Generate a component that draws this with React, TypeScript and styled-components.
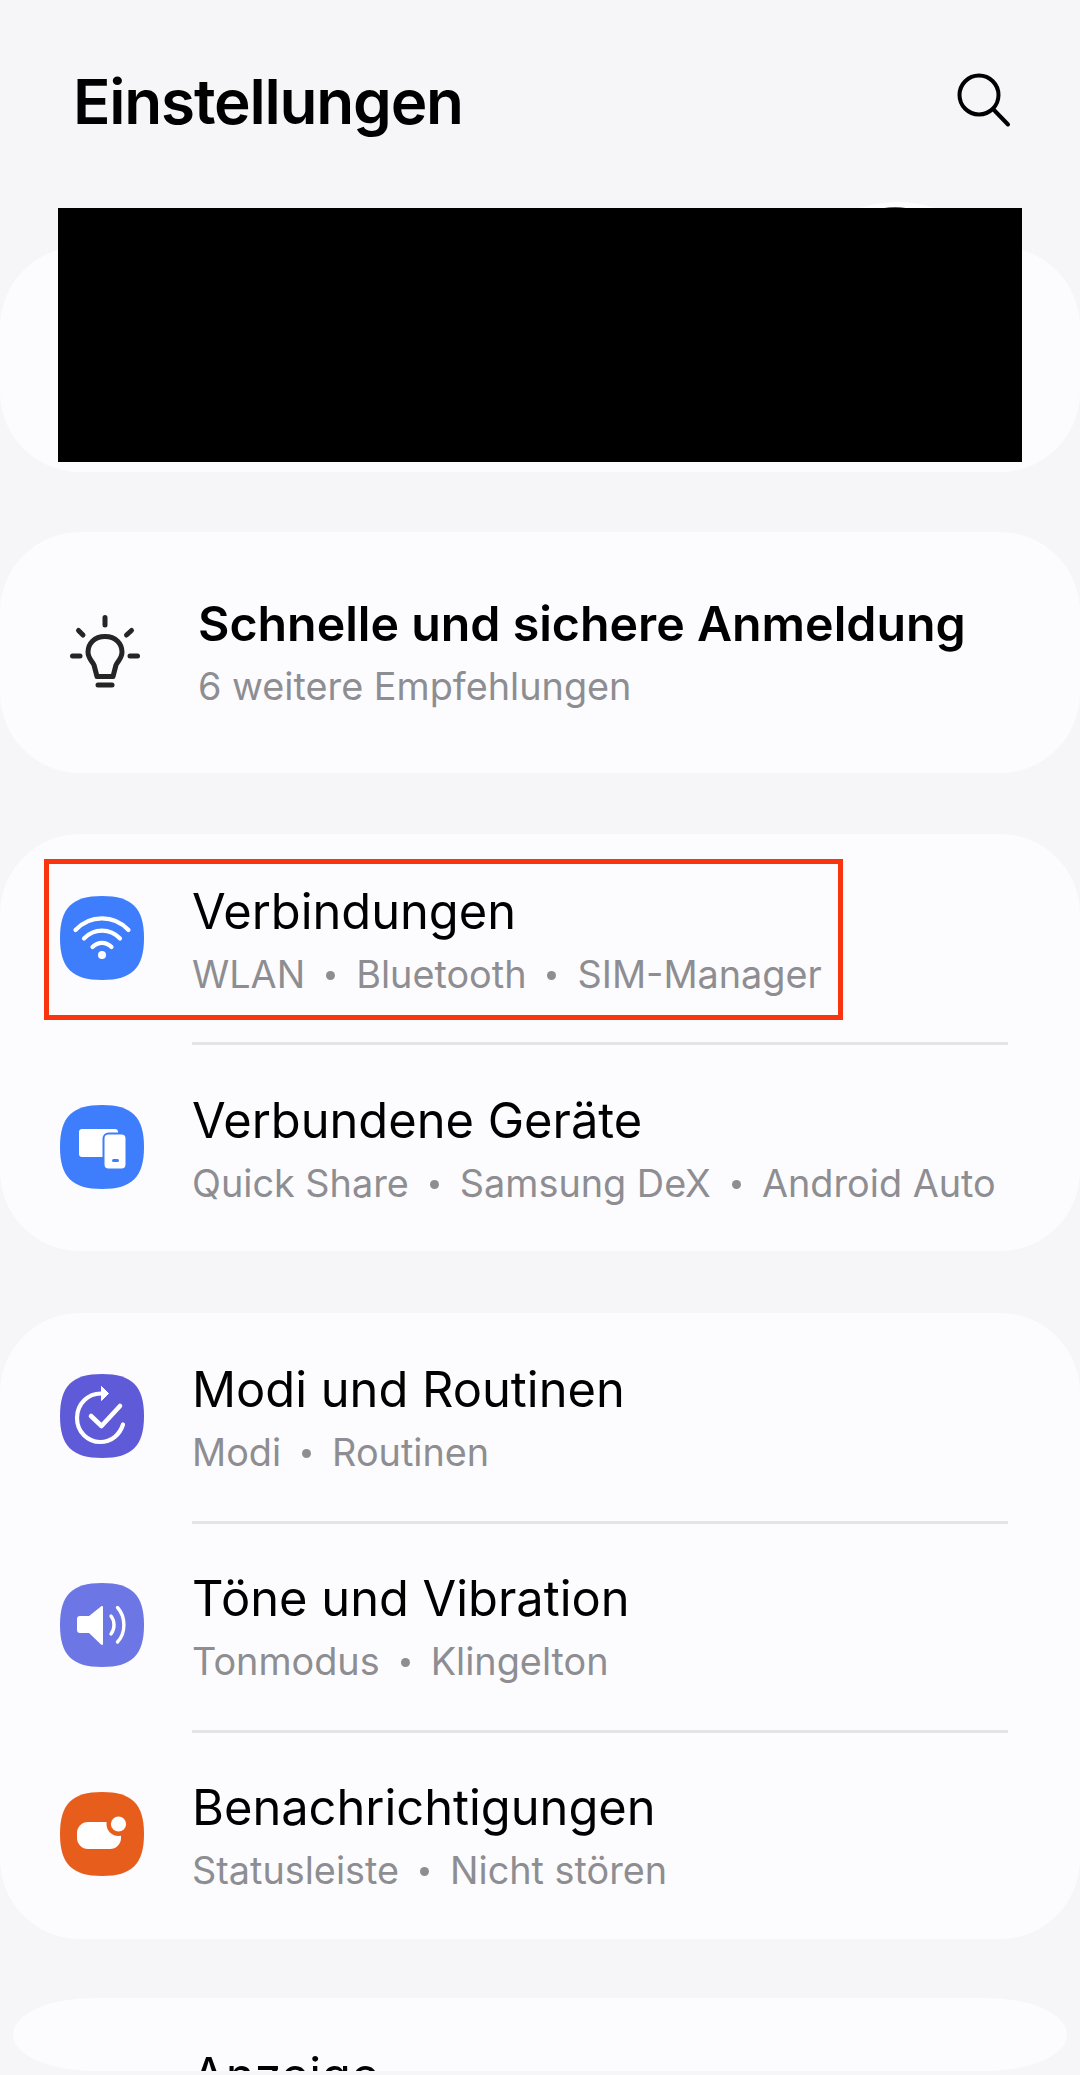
import React from "react";
import styled, { createGlobalStyle } from "styled-components";

const Global = createGlobalStyle`
  html, body { margin: 0; padding: 0; background: #f6f6f8; }
  body { font-family: Inter, "Liberation Sans", sans-serif; }
`;

const Page = styled.div`
  position: relative;
  width: 1080px;
  height: 2075px;
  overflow: hidden;
  background: #f6f6f8;
`;

const Header = styled.header`
  display: flex;
  align-items: center;
  justify-content: space-between;
  height: 200px;
  padding: 3px 67px 0 73px;
  box-sizing: border-box;
`;

const Title = styled.h1`
  margin: 0;
  font-size: 62px;
  line-height: 72px;
  letter-spacing: -1.2px;
  font-weight: 600;
  color: #000;
`;

const SearchBox = styled.div`
  display: flex;
  margin-top: -3px;
`;

const Stack = styled.main`
  display: flex;
  flex-direction: column;
  padding-top: 47px;
`;

const Card = styled.section<{ $h: number; $gap: number }>`
  position: relative;
  height: ${(p) => p.$h}px;
  margin-bottom: ${(p) => p.$gap}px;
  background: #fcfcfe;
  border-radius: 80px;
`;

const Avatar = styled.div`
  position: absolute;
  left: 777px;
  top: -45px;
  width: 240px;
  height: 240px;
  border-radius: 50%;
  background: #fdfdff;

  &::after {
    content: "";
    position: absolute;
    left: 103px;
    top: 5px;
    width: 30px;
    height: 6px;
    border-radius: 50% 50% 0 0;
    background: #44546a;
  }
`;

const Redaction = styled.div`
  position: absolute;
  left: 58px;
  top: -39px;
  width: 964px;
  height: 254px;
  background: #000;
`;

const Tip = styled.div`
  display: flex;
  align-items: center;
  height: 100%;
  padding-left: 69px;
  gap: 57px;
`;

const Row = styled.div<{ $lift: number }>`
  display: flex;
  align-items: center;
  height: 209px;
  box-sizing: border-box;
  padding: 0 0 ${(p) => p.$lift}px 60px;
  gap: 48px;
`;

const Texts = styled.div<{ $top: number }>`
  display: flex;
  flex-direction: column;
  padding-top: ${(p) => p.$top}px;
  white-space: nowrap;
`;

const RowTitle = styled.div<{ $bold?: boolean }>`
  font-size: ${(p) => (p.$bold ? 48.3 : 48.8)}px;
  line-height: 60px;
  font-weight: ${(p) => (p.$bold ? 600 : 400)};
  color: #000;
`;

const RowSub = styled.div`
  margin-top: 5px;
  display: flex;
  align-items: center;
  font-size: 37.8px;
  line-height: 54px;
  color: #8e8e92;
`;

const Dot = styled.span`
  width: 9px;
  height: 9px;
  margin: 3px 21px 0;
  border-radius: 50%;
  background: #8e8e92;
`;

const Divider = styled.div`
  height: 3px;
  margin: -1px 72px -2px 192px;
  background: #e4e4e6;
`;

const Highlight = styled.div`
  position: absolute;
  left: 44px;
  top: 25px;
  width: 799px;
  height: 161px;
  box-sizing: border-box;
  border: 5px solid #f93510;
`;

const Peek = styled.section`
  margin: 0 13px;
  height: 73px;
  overflow: hidden;
  background: #fcfcfe;
  border-radius: 80px / 36.5px;
  padding: 48px 0 0 179px;
  box-sizing: border-box;
`;

const Squircle = ({ color, children }: { color: string; children: React.ReactNode }) => (
  <svg width="84" height="84" viewBox="0 0 84 84" style={{ flex: "none" }}>
    <path d="M42 0C72 0 84 12 84 42C84 72 72 84 42 84C12 84 0 72 0 42C0 12 12 0 42 0Z" fill={color} />
    {children}
  </svg>
);

const Wifi = () => (
  <Squircle color="#3e7dfb">
    <g fill="none" stroke="#fff" strokeWidth="4.2" strokeLinecap="round">
      <path d="M15.5 34C30 18.5 54 18.5 68.5 34" />
      <path d="M24 42.5C34 32 50 32 60 42.5" />
      <path d="M32.5 51C38 45.5 46 45.5 51.5 51" />
    </g>
    <circle cx="42" cy="59" r="4" fill="#fff" />
  </Squircle>
);

const Devices = () => (
  <Squircle color="#3e7dfb">
    <rect x="19" y="24" width="39" height="28" rx="3" fill="#fff" />
    <rect x="43.5" y="28.5" width="23" height="36" rx="5" fill="#fff" stroke="#3e7dfb" strokeWidth="2" />
    <rect x="52" y="54" width="7" height="3" rx="1.5" fill="#3e7dfb" />
  </Squircle>
);

const Modes = () => (
  <Squircle color="#5f5bd8">
    <g fill="none" stroke="#fff" strokeLinecap="round" strokeLinejoin="round">
      <path d="M42 19.5C28 19 17 30 17 44C17 58 28 68 40 68C52 68 60 60 63 50.5" strokeWidth="4.2" />
      <path d="M31 42L41.5 52L60 32" strokeWidth="4.6" />
    </g>
    <path d="M41.5 12.5L48.5 19.5L41.5 26.5Z" fill="#fff" stroke="#fff" strokeWidth="1" strokeLinejoin="round" />
  </Squircle>
);

const Sound = () => (
  <Squircle color="#6c76e4">
    <path d="M20 33H29L41 23.5C42 22.6 43 23 43 24.5V60.5C43 62 42 62.5 41 61.6L29 50H20C18 50 17 49 17 47V36C17 34 18 33 20 33Z" fill="#fff" />
    <g fill="none" stroke="#fff" strokeWidth="3.4" strokeLinecap="round">
      <path d="M51 33C55 38 55 46 51 51" />
      <path d="M57.5 24.5C66 34 66 50 57.5 59" />
    </g>
  </Squircle>
);

const Bell = () => (
  <Squircle color="#e75e1c">
    <rect x="17" y="30" width="44" height="27" rx="11" fill="#fff" />
    <circle cx="58.5" cy="32" r="12" fill="#e75e1c" />
    <circle cx="58.5" cy="32" r="7.6" fill="#fff" />
  </Squircle>
);

const Bulb = () => (
  <svg width="72" height="78" viewBox="0 0 72 78" style={{ flex: "none" }}>
    <g fill="none" stroke="#252525" strokeWidth="5" strokeLinecap="round" strokeLinejoin="round">
      <path d="M36 3.5V11" />
      <path d="M9.5 16.5L14 21" />
      <path d="M62.5 16.5L57.5 21" />
      <path d="M3.5 42H11" />
      <path d="M61 42H68.5" />
      <path d="M36 22.5C25 22.5 19 30 19 38C19 44 23 47 25 51L28 62.5H44L47 51C49 47 53 44 53 38C53 30 47 22.5 36 22.5Z" />
      <path d="M29 71H43" />
    </g>
  </svg>
);

const Search = () => (
  <svg width="60" height="60" viewBox="0 0 60 60">
    <g fill="none" stroke="#000" strokeWidth="4" strokeLinecap="round">
      <circle cx="26" cy="25" r="19.5" />
      <path d="M40.5 39.5L55 54.5" />
    </g>
  </svg>
);

const Sub = ({ items }: { items: string[] }) => (
  <RowSub>
    {items.map((t, i) => (
      <React.Fragment key={t}>
        {i > 0 && <Dot />}
        <span>{t}</span>
      </React.Fragment>
    ))}
  </RowSub>
);

const Item = ({ icon, title, items, lift = 2 }: { icon: React.ReactNode; title: string; items: string[]; lift?: number }) => (
  <Row $lift={lift}>
    {icon}
    <Texts $top={8}>
      <RowTitle>{title}</RowTitle>
      <Sub items={items} />
    </Texts>
  </Row>
);

export default function App() {
  return (
    <Page>
      <Global />
      <Header>
        <Title>Einstellungen</Title>
        <SearchBox>
          <Search />
        </SearchBox>
      </Header>
      <Stack>
        <Card $h={225} $gap={60}>
          <Avatar />
          <Redaction />
        </Card>
        <Card $h={241} $gap={61}>
          <Tip>
            <Bulb />
            <Texts $top={2.5}>
              <RowTitle $bold>Schnelle und sichere Anmeldung</RowTitle>
              <Sub items={["6 weitere Empfehlungen"]} />
            </Texts>
          </Tip>
        </Card>
        <Card $h={417} $gap={62}>
          <Item icon={<Wifi />} title="Verbindungen" items={["WLAN", "Bluetooth", "SIM-Manager"]} />
          <Divider />
          <Item icon={<Devices />} title="Verbundene Geräte" items={["Quick Share", "Samsung DeX", "Android Auto"]} />
          <Highlight />
        </Card>
        <Card $h={626} $gap={59}>
          <Item lift={4} icon={<Modes />} title="Modi und Routinen" items={["Modi", "Routinen"]} />
          <Divider />
          <Item lift={4} icon={<Sound />} title="Töne und Vibration" items={["Tonmodus", "Klingelton"]} />
          <Divider />
          <Item lift={4} icon={<Bell />} title="Benachrichtigungen" items={["Statusleiste", "Nicht stören"]} />
        </Card>
        <Peek>
          <RowTitle>Anzeige</RowTitle>
        </Peek>
      </Stack>
    </Page>
  );
}
